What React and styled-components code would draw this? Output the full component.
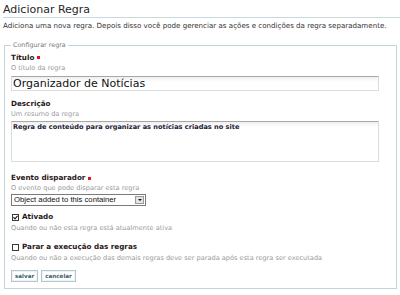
import React from "react";
import styled, { createGlobalStyle } from "styled-components";

// --- Components --- //

const Required = () => <RequiredMark aria-label="obrigatório" />;

const Field = ({ label, hint, required, gap, children }) => (
  <StyledField $gap={gap}>
    <Label>
      {label}
      {required && <Required />}
    </Label>
    {hint && <Hint>{hint}</Hint>}
    {children}
  </StyledField>
);

const CheckField = ({ label, hint, checked, gap }) => (
  <StyledField $gap={gap}>
    <CheckRow>
      <CheckBox>
        {checked && (
          <svg width="5" height="5" viewBox="0 0 5 5">
            <path d="M0.5 2.2 L2 3.8 L4.6 0.8" fill="none" stroke="#1b1b1b" strokeWidth="1.2" />
          </svg>
        )}
      </CheckBox>
      <Label>{label}</Label>
    </CheckRow>
    <Hint $offset={1}>{hint}</Hint>
  </StyledField>
);

export default function App() {
  return (
    <>
      <GlobalStyle />
      <Page>
        <Heading>Adicionar Regra</Heading>
        <Description>
          Adiciona uma nova regra. Depois disso você pode gerenciar as ações e
          condições da regra separadamente.
        </Description>
        <Fieldset>
          <Legend>Configurar regra</Legend>

          <Field label="Título" hint="O título da regra" required gap={3.5}>
            <TextInput>Organizador de Notícias</TextInput>
          </Field>

          <Field label="Descrição" hint="Um resumo da regra" gap={8.5}>
            <TextArea>Regra de conteúdo para organizar as notícias criadas no site</TextArea>
          </Field>

          <Field
            label="Evento disparador"
            hint="O evento que pode disparar esta regra"
            required
            gap={11}
          >
            <Select>
              <SelectValue>Object added to this container</SelectValue>
              <SelectArrow />
            </Select>
          </Field>

          <CheckField
            label="Ativado"
            hint="Quando ou não esta regra está atualmente ativa"
            checked
            gap={6}
          />

          <CheckField
            label="Parar a execução das regras"
            hint="Quando ou não a execução das demais regras deve ser parada após esta regra ser executada"
            gap={9}
          />

          <Buttons>
            <Button>salvar</Button>
            <Button>cancelar</Button>
          </Buttons>
        </Fieldset>
      </Page>
    </>
  );
}

// --- Styles --- //

const GlobalStyle = createGlobalStyle`
  html, body {
    margin: 0;
    padding: 0;
    background: #ffffff;
  }
  body {
    font-family: "DejaVu Sans", Verdana, sans-serif;
    color: #222;
  }
`;

const Page = styled.div`
  width: 400px;
  height: 295px;
  padding: 4px 0 0 3px;
  box-sizing: border-box;
  overflow: hidden;
`;

const Heading = styled.h1`
  margin: 0;
  font-size: 11px;
  line-height: 12px;
  font-weight: normal;
  color: #1f1f1f;
  padding-bottom: 1px;
  border-bottom: 1px solid #c9d8de;
`;

const Description = styled.p`
  margin: 3px 0 0 0;
  font-size: 7.1px;
  line-height: 9px;
  color: #333;
  white-space: nowrap;
`;

const Fieldset = styled.fieldset`
  margin: 11px 3px 0 1px;
  padding: 0 6px 6px 6px;
  border: 1px solid #c3d5db;
`;

const Legend = styled.legend`
  margin-left: 0;
  padding: 0 2px;
  font-size: 6.4px;
  line-height: 8px;
  color: #7a7a7a;
`;

const StyledField = styled.div`
  margin-top: ${(props) => props.$gap || 0}px;
`;

const Label = styled.div`
  font-size: 7.2px;
  line-height: 10px;
  font-weight: bold;
  color: #2a1818;
  display: flex;
  align-items: center;
  white-space: nowrap;
`;

const RequiredMark = styled.span`
  display: inline-block;
  width: 3px;
  height: 3px;
  margin-left: 3px;
  background: #ee1111;
`;

const Hint = styled.div`
  margin-top: ${(props) => props.$offset || 0}px;
  font-size: 6.6px;
  line-height: 10px;
  color: #9a9a9a;
  white-space: nowrap;
`;

const TextInput = styled.div`
  margin-top: 3px;
  width: 368px;
  height: 15px;
  box-sizing: border-box;
  padding: 0 1px;
  font-size: 11px;
  line-height: 14px;
  color: #111;
  border: 1px solid #dcdcdc;
  border-top-color: #a8a8a8;
  background: linear-gradient(#efefef, #ffffff 5px);
`;

const TextArea = styled.div`
  margin-top: 2px;
  width: 368px;
  height: 41px;
  box-sizing: border-box;
  padding: 1px 1px;
  font-size: 6.6px;
  line-height: 8px;
  font-weight: bold;
  color: #1a1a33;
  border: 1px solid #dcdcdc;
  border-top-color: #a8a8a8;
  background: linear-gradient(#efefef, #ffffff 5px);
`;

const Select = styled.div`
  margin-top: 1px;
  width: 135px;
  height: 12px;
  box-sizing: border-box;
  display: flex;
  align-items: stretch;
  border: 1px solid #7a7a7a;
  background: #fff;
`;

const SelectValue = styled.div`
  flex: 1;
  padding-left: 2px;
  font-family: "Liberation Sans", Arial, sans-serif;
  font-size: 7.7px;
  line-height: 10px;
  color: #111;
  white-space: nowrap;
`;

const SelectArrow = styled.div`
  width: 9px;
  margin: 1px;
  background: #e4e4e4;
  border: 1px solid #9a9a9a;
  box-sizing: border-box;
  display: flex;
  align-items: center;
  justify-content: center;

  &::after {
    content: "";
    border-left: 2px solid transparent;
    border-right: 2px solid transparent;
    border-top: 2px solid #111;
  }
`;

const CheckRow = styled.div`
  display: flex;
  align-items: center;
  gap: 3px;
`;

const CheckBox = styled.span`
  display: inline-flex;
  width: 7px;
  height: 7px;
  margin-left: 1px;
  box-sizing: border-box;
  border: 1px solid #3a3a3a;
  background: #fff;
  align-items: center;
  justify-content: center;
`;

const Buttons = styled.div`
  margin-top: 7px;
  display: flex;
  gap: 3px;
`;

const Button = styled.button`
  height: 12px;
  padding: 0 3px;
  font-family: "DejaVu Sans", Verdana, sans-serif;
  font-size: 5.6px;
  line-height: 10px;
  font-weight: bold;
  color: #3b5f6b;
  background: #fff;
  border: 1px solid #b5c7cd;
  box-shadow: inset 0 0 0 1px #eef3f5;
  cursor: pointer;
`;
